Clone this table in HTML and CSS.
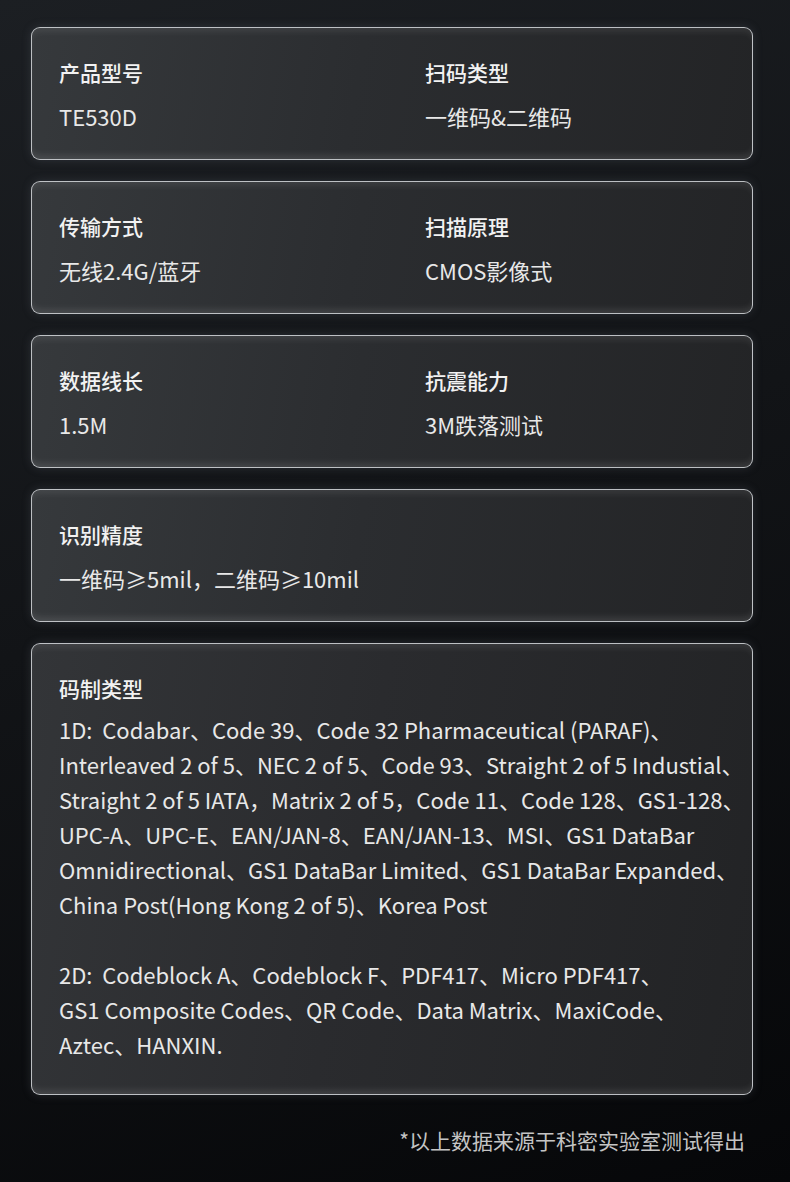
FILE: index.html
```html
<!DOCTYPE html>
<html lang="zh-CN">
<head>
<meta charset="utf-8">
<link rel="stylesheet" href="styles.css">
</head>
<body>
<main class="page">
  <section class="card">
    <div class="cell"><div class="label">产品型号</div><div class="value">TE530D</div></div>
    <div class="cell"><div class="label">扫码类型</div><div class="value">一维码&amp;二维码</div></div>
  </section>
  <section class="card">
    <div class="cell"><div class="label">传输方式</div><div class="value">无线2.4G/蓝牙</div></div>
    <div class="cell"><div class="label">扫描原理</div><div class="value">CMOS影像式</div></div>
  </section>
  <section class="card">
    <div class="cell"><div class="label">数据线长</div><div class="value">1.5M</div></div>
    <div class="cell"><div class="label">抗震能力</div><div class="value">3M跌落测试</div></div>
  </section>
  <section class="card single">
    <div class="cell"><div class="label">识别精度</div><div class="value">一维码≥5mil，二维码≥10mil</div></div>
  </section>
  <section class="card big">
    <div class="label">码制类型</div>
    <div class="lines">
      <span class="line">1D:&nbsp; Codabar、Code 39、Code 32 Pharmaceutical (PARAF)、</span>
      <span class="line">Interleaved 2 of 5、NEC 2 of 5、Code 93、Straight 2 of 5 Industial、</span>
      <span class="line">Straight 2 of 5 IATA，Matrix 2 of 5，Code 11、Code 128、GS1-128、</span>
      <span class="line">UPC-A、UPC-E、EAN/JAN-8、EAN/JAN-13、MSI、GS1 DataBar</span>
      <span class="line">Omnidirectional、GS1 DataBar Limited、GS1 DataBar Expanded、</span>
      <span class="line">China Post(Hong Kong 2 of 5)、Korea Post</span>
      <span class="line blank">&nbsp;</span>
      <span class="line">2D:&nbsp; Codeblock A、Codeblock F、PDF417、Micro PDF417、</span>
      <span class="line">GS1 Composite Codes、QR Code、Data Matrix、MaxiCode、</span>
      <span class="line">Aztec、HANXIN.</span>
    </div>
  </section>
  <p class="note">*以上数据来源于科密实验室测试得出</p>
</main>
</body>
</html>
```

FILE: styles.css
```css
html, body {
  margin: 0;
  padding: 0;
}
body {
  width: 790px;
  height: 1182px;
  overflow: hidden;
  background: linear-gradient(160deg, #1c1f23 0%, #121417 45%, #060709 100%);
  font-family: "Noto Sans CJK SC", "Noto Sans", sans-serif;
  color: #eeeeee;
}
.page {
  display: flex;
  flex-direction: column;
  gap: 21px;
  padding: 27px 37px 0 31px;
}
.card {
  box-sizing: border-box;
  height: 133px;
  border: 1px solid rgba(215, 218, 222, 0.85);
  border-radius: 9px;
  background: linear-gradient(100deg, #36393c 0%, #2b2d30 45%, #232426 100%);
  box-shadow: inset 0 -7px 6px -3px rgba(255, 255, 255, 0.10),
              inset 0 7px 6px -3px rgba(255, 255, 255, 0.08),
              0 0 10px rgba(110, 120, 130, 0.25);
  display: grid;
  grid-template-columns: 366px 1fr;
  padding: 29px 27px 0 27px;
}
.card.single {
  grid-template-columns: 1fr;
}
.label {
  font-size: 21px;
  line-height: 30px;
  font-weight: 500;
  color: #f2f2f2;
}
.value {
  font-size: 22px;
  line-height: 30px;
  margin-top: 14px;
  color: #e8e8e8;
}
.card.big {
  height: 452px;
  display: block;
  background: linear-gradient(100deg, #333538 0%, #2a2b2e 45%, #222325 100%);
}
.lines {
  margin-top: 9px;
  font-size: 22px;
  line-height: 35px;
  color: #e8e8e8;
}
.line {
  display: block;
  white-space: nowrap;
}
.note {
  margin: 10px 8px 0 0;
  text-align: right;
  font-size: 21px;
  line-height: 28px;
  color: #c4c4c4;
}
```
